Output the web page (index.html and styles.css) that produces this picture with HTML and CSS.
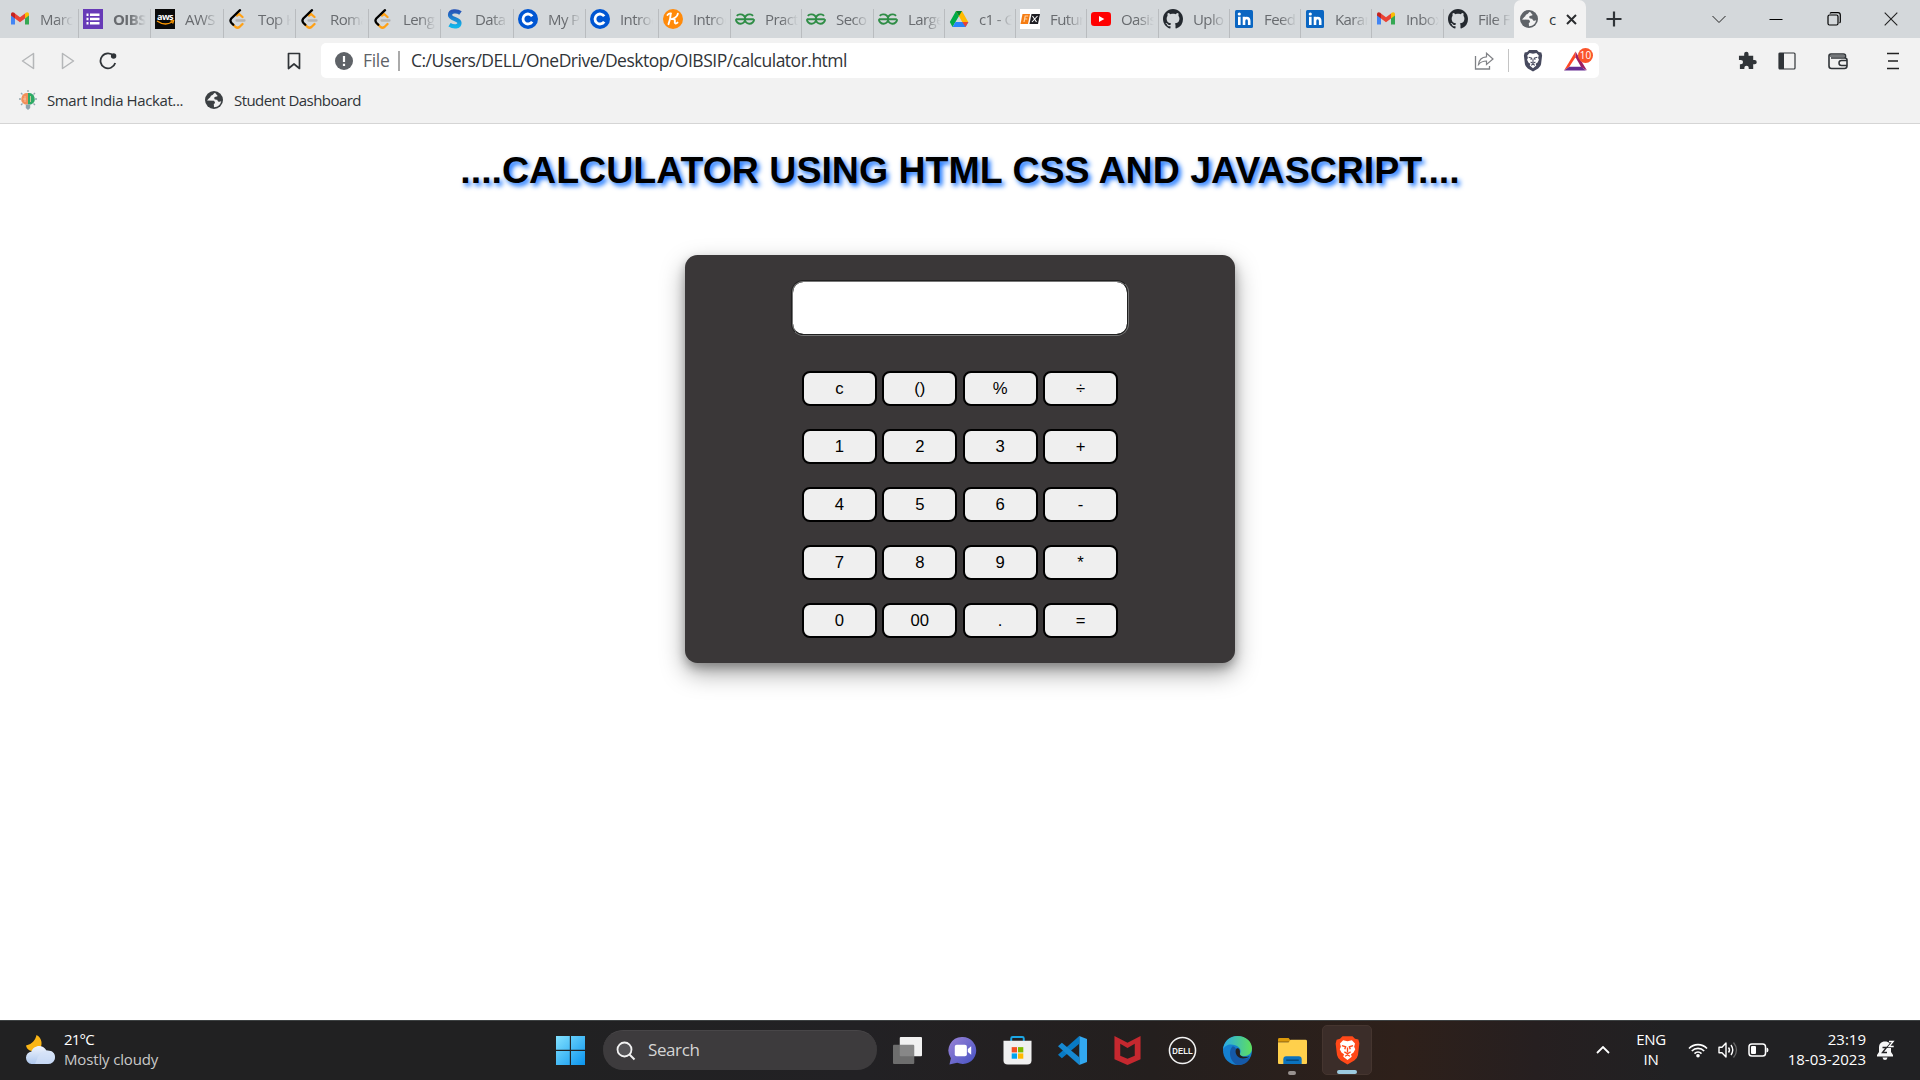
FILE: index.html
```html
<!DOCTYPE html>
<html lang="en">
<head>
<meta charset="utf-8">
<title>calculator</title>
<link rel="stylesheet" href="styles.css">
</head>
<body>
<svg class="defs" width="0" height="0">
  <defs>
    <linearGradient id="s-blue" x1="0" y1="0" x2="0" y2="1"><stop offset="0" stop-color="#2756b8"/><stop offset="1" stop-color="#12b5ea"/></linearGradient>
    <linearGradient id="win" x1="0" y1="0" x2="1" y2="1"><stop offset="0" stop-color="#83e2ff"/><stop offset="1" stop-color="#0a94ee"/></linearGradient>
    <linearGradient id="chat" x1="0" y1="0" x2="1" y2="1"><stop offset="0" stop-color="#9a83d6"/><stop offset="1" stop-color="#4552c4"/></linearGradient>
    <linearGradient id="cloud" x1="0" y1="0" x2="0" y2="1"><stop offset="0" stop-color="#f0f5fd"/><stop offset="1" stop-color="#aec8ee"/></linearGradient>
    <linearGradient id="edge-a" x1="0" y1="0" x2="1" y2="0"><stop offset="0" stop-color="#2aa9e8"/><stop offset="1" stop-color="#5fe05d"/></linearGradient>
    <symbol id="gmail" viewBox="0 0 20 20">
      <path d="M1 5v10.500h4V8z" fill="#4285f4"/><path d="M19 5v10.500h-4V8z" fill="#34a853"/>
      <path d="M15 4.500 10 8.300 5 4.500v5L10 13.300l5-3.800z" fill="#ea4335"/>
      <path d="M1 5.200C1 3 3 2.600 4.300 3.800L5 4.500v5L1 6.500z" fill="#c5221f"/>
      <path d="M19 5.200C19 3 17 2.600 15.700 3.800L15 4.500v5l4-3z" fill="#fbbc04"/>
    </symbol>
    <symbol id="forms" viewBox="0 0 20 20"><path d="M0 0h20v20H0z" fill="#673ab7"/><path d="M3.500 4.500h2v2.500h-2zM7 4.500h9.500V7H7zM3.500 8.700h2v2.500h-2zM7 8.700h9.500v2.500H7zM3.500 12.900h2v2.500h-2zM7 12.900h9.500v2.500H7z" fill="#fff"/></symbol>
    <symbol id="aws" viewBox="0 0 20 20"><path d="M0 0h20v20H0z" fill="#0a0a0a"/><text x="10" y="10.500" text-anchor="middle" textLength="16" lengthAdjust="spacingAndGlyphs" class="logo-aws">aws</text><path d="M2 12q8 5.500 15 1M15.500 12l3-.3-.9 2.800" fill="none" stroke="#ff9900" stroke-width="1.300"/></symbol>
    <symbol id="leet" viewBox="0 0 20 20"><g fill="none" stroke-linecap="round" stroke-width="2.300"><path d="M8.500 11.500h8" stroke="#b3b3b3"/><path d="M9 6.500 11 5l3.500 3M14.500 15l-3 3q-2 1.500-4 0l-3-3" stroke="#ffa116"/><path d="M12 1.200 3.300 9.500q-1.700 2 0 4.200l2 2" stroke="#000"/></g></symbol>
    <symbol id="simpl" viewBox="0 0 20 20"><path d="M15.500 4C12 1.500 5 1.500 5 6c0 4.500 9.500 3.500 9.500 8 0 4.200-6 4.200-10 1.800" fill="none" stroke="url(#s-blue)" stroke-width="4.200"/></symbol>
    <symbol id="coursera" viewBox="0 0 20 20"><circle cx="10" cy="10" r="10" fill="#0056d2"/><path d="M14.200 7.300a5 5 0 1 0 0 5.400" fill="none" stroke="#fff" stroke-width="2.800"/></symbol>
    <symbol id="kaggle" viewBox="0 0 20 20"><circle cx="10" cy="10" r="10" fill="#ff8a0a"/><path d="M7.800 4.500Q7.500 10 5.500 15.200M14.800 4.800c-.5 3-4 5.200-6.800 5.300 4-.5 4.200 1 3.800 3-.2 1.700 1.500 1.700 2.700.5M4.500 6q1.500-2 3.500-1.500" fill="none" stroke="#fff" stroke-width="1.900" stroke-linecap="round"/></symbol>
    <symbol id="gfg" viewBox="0 0 20 20"><path d="M.8 10.200h18M1.800 6.800Q3 5.300 5.200 5.400a4.700 4.700 0 1 1-4.300 4.800M18 6.800q-1.200-1.500-3.200-1.400a4.700 4.700 0 1 0 4.300 4.800" fill="none" stroke="#2f8d46" stroke-width="1.900"/></symbol>
    <symbol id="drive" viewBox="0 0 20 20"><path d="M7 2h6l-3 5-6.500 11L.8 13z" fill="#00ac47"/><path d="M7 2h6l6.200 11h-6z" fill="#ffba00"/><path d="M7 2h6l-3 5z" fill="#00832d"/><path d="M3.500 18 6.500 13h13L16.500 18z" fill="#2684fc"/><path d="M13.300 13h6L16.500 18z" fill="#ea4335"/></symbol>
    <symbol id="fx" viewBox="0 0 20 20"><path d="M0 0h20v20H0z" fill="#fff"/><path d="M2.500 5H10L8 15H.5z" fill="#f57c12"/><path d="M11.500 5H20l-2 10H9.500z" fill="#1f1f24"/><path d="M4 13l1.200-6h3M4.800 10h2.500" fill="none" stroke="#ffd3a3" stroke-width="1.200"/><path d="m12.500 7 4 6m1-6-5.500 6" stroke="#fff" stroke-width="1.100"/></symbol>
    <symbol id="youtube" viewBox="0 0 20 20"><rect y="3" width="20" height="14" rx="3.300" fill="#f00"/><path d="m8 7 5.300 3L8 13z" fill="#fff"/></symbol>
    <symbol id="github" viewBox="0 0 16 16"><path fill="#24292f" d="M8 0C3.580 0 0 3.580 0 8c0 3.540 2.290 6.530 5.470 7.590.4.070.55-.17.55-.38 0-.19-.01-.82-.01-1.490-2.010.37-2.530-.49-2.690-.94-.09-.23-.48-.94-.82-1.130-.28-.15-.68-.52-.01-.53.63-.01 1.080.58 1.230.82.72 1.210 1.870.87 2.330.66.07-.52.28-.87.51-1.070-1.780-.2-3.640-.89-3.640-3.950 0-.87.31-1.590.82-2.150-.08-.2-.36-1.020.08-2.120 0 0 .67-.21 2.200.82.64-.18 1.320-.27 2-.27s1.360.09 2 .27c1.530-1.040 2.200-.82 2.200-.82.44 1.100.16 1.920.08 2.120.51.56.82 1.270.82 2.150 0 3.070-1.870 3.750-3.650 3.950.29.25.54.73.54 1.480 0 1.070-.01 1.930-.01 2.200 0 .21.15.46.55.38A8.010 8.010 0 0 0 16 8c0-4.420-3.580-8-8-8"/></symbol>
    <symbol id="linkedin" viewBox="0 0 20 20"><rect x="1" y="1" width="18" height="18" rx="1.500" fill="#0a66c2"/><circle cx="5.300" cy="5" r="1.600" fill="#fff"/><path d="M5.300 7.800v8.300M10 16.100V7.800M10 12c0-4 5.200-4 5.200 0v4.100" fill="none" stroke="#fff" stroke-width="2.600"/></symbol>
    <symbol id="globe" viewBox="0 0 20 20"><circle cx="10" cy="10" r="9" fill="currentColor"/><path d="M11 2.700c-2 1-1.500 2-3 2.500-2 .6-1.200 2.300-2.700 2.800L3 10.500l7 .3c1.500 1.700 1.200 2.700-.2 3.200l.2 3.300c4-.2 6.300-2.500 7.200-6-2.200 1-3.600.2-4-1.600-2.200.3-3.200-.5-2.900-2.200.5-1.200 2.400-.7 3.400-1.600z" fill="#f2f2f2"/></symbol>
    <symbol id="lion" viewBox="0 0 20 24"><path d="m6 1-2 2-2.700.7-.8 3L1.600 16q.4 2.500 3 4.300L10 23.500l5.400-3.200q2.600-1.800 3-4.300l1.100-9.300-.8-3L16 3l-2-2z" fill="var(--shield)"/><path d="M6.500 4.200 10 5l3.500-.8L16 6.700l-.7 2.600.9 2-1.400 2.700-2 1.300.6 2L10 20l-3.400-2.700.6-2-2-1.300-1.400-2.700.9-2L4 6.700z" fill="#fff"/><path d="m5.500 8.500 3 .9-.7 2M14.500 8.500l-3 .9.700 2M10 10v4M7.500 13.500 10 15l2.500-1.500M8 17l2-1 2 1" fill="none" stroke="var(--shield)" stroke-width="1.100"/></symbol>
  </defs>
</svg>

<header class="tabstrip">
  <div class="tabs">
    <div class="tab first"><svg><use href="#gmail"/></svg><span>Marc</span></div>
    <div class="tab"><svg><use href="#forms"/></svg><span class="strong">OIBS</span></div>
    <div class="tab"><svg><use href="#aws"/></svg><span>AWS</span></div>
    <div class="tab"><svg><use href="#leet"/></svg><span>Top K</span></div>
    <div class="tab"><svg><use href="#leet"/></svg><span>Roma</span></div>
    <div class="tab"><svg><use href="#leet"/></svg><span>Leng</span></div>
    <div class="tab"><svg><use href="#simpl"/></svg><span>Data</span></div>
    <div class="tab"><svg><use href="#coursera"/></svg><span>My P</span></div>
    <div class="tab"><svg><use href="#coursera"/></svg><span>Introd</span></div>
    <div class="tab"><svg><use href="#kaggle"/></svg><span>Introd</span></div>
    <div class="tab"><svg><use href="#gfg"/></svg><span>Pract</span></div>
    <div class="tab"><svg><use href="#gfg"/></svg><span>Seco</span></div>
    <div class="tab"><svg><use href="#gfg"/></svg><span>Large</span></div>
    <div class="tab"><svg><use href="#drive"/></svg><span>c1 - G</span></div>
    <div class="tab"><svg><use href="#fx"/></svg><span>Futur</span></div>
    <div class="tab"><svg><use href="#youtube"/></svg><span>Oasis</span></div>
    <div class="tab"><svg><use href="#github"/></svg><span>Uplo</span></div>
    <div class="tab"><svg><use href="#linkedin"/></svg><span>Feed</span></div>
    <div class="tab"><svg><use href="#linkedin"/></svg><span>Karan</span></div>
    <div class="tab"><svg><use href="#gmail"/></svg><span>Inbox</span></div>
    <div class="tab last"><svg><use href="#github"/></svg><span>File F</span></div>
    <div class="tab active"><svg><use href="#globe"/></svg><span>c</span><svg class="close" viewBox="0 0 11 11"><path d="m1 1 9 9m0-9-9 9" stroke="#2b2d30" stroke-width="2"/></svg></div>
  </div>
  <svg class="new-tab" viewBox="0 0 16 16"><path d="M8 .5v15M.5 8h15" stroke="#303438" stroke-width="2.200"/></svg>
  <div class="window-buttons">
    <svg viewBox="0 0 14 14"><path d="m.5 4 6.500 6.500L13.500 4" fill="none" stroke="#222"/></svg>
    <svg viewBox="0 0 14 14"><path d="M.5 7.500h13" stroke="#000"/></svg>
    <svg viewBox="0 0 14 14"><rect x="1" y="3" width="10" height="10" rx="1.500" fill="none" stroke="#000" stroke-width="1.200"/><path d="M3 1.500q.5-.8 1.500-.8H11q2.300 0 2.300 2.300v6.500q0 1-.8 1.500" fill="none" stroke="#000" stroke-width="1.200"/></svg>
    <svg viewBox="0 0 14 14"><path d="m.7.700 12.600 12.600m0-12.600L.7 13.300" stroke="#222" stroke-width="1.100"/></svg>
  </div>
</header>

<nav class="toolbar">
  <div class="nav-row">
    <svg class="back" viewBox="0 0 14 18"><path d="M12.500 1.500v15L1.500 9z" fill="none" stroke="#b5b7b9" stroke-width="1.500" stroke-linejoin="round"/></svg>
    <svg class="forward" viewBox="0 0 14 18"><path d="M1.500 1.500v15l11-7.500z" fill="none" stroke="#b5b7b9" stroke-width="1.500" stroke-linejoin="round"/></svg>
    <svg class="reload" viewBox="0 0 18 18"><path d="M14.700 4A7.500 7.500 0 1 0 16.200 11" fill="none" stroke="#303438" stroke-width="1.800"/><circle cx="14.600" cy="4" r="2.700" fill="#303438"/></svg>
    <svg class="bookmark" viewBox="0 0 14 18"><path d="M1.500 1.500h11v15L7 12l-5.500 4.500z" fill="none" stroke="#303438" stroke-width="1.700" stroke-linejoin="round"/></svg>
    <div class="address">
      <svg class="info" viewBox="0 0 18 18"><circle cx="9" cy="9" r="9" fill="#5f6368"/><path d="M9 4v6M9 11.700V14" stroke="#fff" stroke-width="2.200"/></svg>
      <span class="scheme">File</span>
      <span class="url">C:/Users/DELL/OneDrive/Desktop/OIBSIP/calculator.html</span>
      <svg class="share" viewBox="0 0 20 18"><path d="M1.500 4v13h14v-3" fill="none" stroke="#808286" stroke-width="1.300"/><path d="M4.500 12.500C5 7.500 8 5 12.500 4.800V1.200L19 7l-6.500 5.500V9Q7.500 9 4.500 12.500z" fill="none" stroke="#808286" stroke-width="1.200"/></svg>
      <svg class="shield"><use href="#lion"/></svg>
      <div class="rewards">
        <svg viewBox="0 0 24 20"><path d="M12 0v6L5.500 16 0 20z" fill="#ff4724"/><path d="M12 0v6l6 10.500 6 3.500z" fill="#9e1f63"/><path d="M0 20 5.500 16H18l5 4z" fill="#662d91"/></svg>
        <span class="badge">10</span>
      </div>
    </div>
    <div class="extensions">
      <svg class="puzzle" viewBox="0 0 20 20"><path d="M1 5h5.500V3a2.300 2.300 0 0 1 4.600 0v2H16v4.500h1.500a2.200 2.200 0 0 1 0 4.500H16v5h-4.700v-1.300a2.300 2.300 0 0 0-4.600 0V19H2v-5h1a2.300 2.300 0 0 0 0-4.600H1z" fill="#303438"/></svg>
      <svg class="side" viewBox="0 0 18 18"><rect x="1" y="1" width="16" height="16" rx="1" fill="none" stroke="#303438" stroke-width="1.200"/><path d="M1 1h5v16H1z" fill="#303438"/></svg>
      <svg class="wallet" viewBox="0 0 20 18"><path d="M17.500 6V4q0-2-2-2H3Q1 2 1 4v10q0 2.500 2.500 2.500h13q2.300 0 2.500-2.500V8q0-2-2.500-2H3" fill="none" stroke="#303438" stroke-width="1.600"/><path d="M19 8.500h-5.500a2.500 2.500 0 0 0 0 5H19" fill="none" stroke="#303438" stroke-width="1.500"/><path d="M2 3h15v2H2z" fill="#74777a"/></svg>
      <svg class="menu" viewBox="0 0 12 18"><path d="M0 1.500h12M1 9h10M0 16.500h12" stroke="#222" stroke-width="1.700"/></svg>
    </div>
  </div>
  <div class="bookmarks">
    <svg class="bulb" viewBox="0 0 20 20"><path d="M10 0v2M3 3l1.500 1.500M17 3l-1.500 1.500M1 9h2M17 9h2M3 15l1.500-1.500M17 15l-1.500-1.500" stroke="#91a5ad" stroke-width="1.300"/><path d="M10 3a6 6 0 0 0-3 11.500h3z" fill="#f1905b"/><path d="M10 3a6 6 0 0 1 3 11.500h-3z" fill="#2eaa66"/><path d="M7 6v6M12.500 6v6M5 9h3" stroke="#ffd0b2" stroke-width=".7"/><path d="M7.800 14.500h4.400V18L10 20l-2.200-2z" fill="#8fa3ad"/></svg>
    <span class="bm-one">Smart India Hackat...</span>
    <svg class="world"><use href="#globe"/></svg>
    <span class="bm-two">Student Dashboard</span>
  </div>
</nav>

<main class="page">
  <h1>....CALCULATOR USING HTML CSS AND JAVASCRIPT....</h1>
  <section class="calculator">
    <input class="display" type="text" aria-label="Result">
    <div class="keys">
      <button>c</button><button>()</button><button>%</button><button>÷</button>
      <button>1</button><button>2</button><button>3</button><button>+</button>
      <button>4</button><button>5</button><button>6</button><button>-</button>
      <button>7</button><button>8</button><button>9</button><button>*</button>
      <button>0</button><button>00</button><button>.</button><button>=</button>
    </div>
  </section>
</main>

<footer class="taskbar">
  <div class="weather">
    <svg viewBox="0 0 30 30"><path d="M11.500 0c-1 5-4 9-10.500 10.500C2 16 9 18 14 14.500 18 11 17.500 3 11.500 0z" fill="#fbb616"/><path d="M6.500 29a6.300 6.300 0 0 1 0-12.500C8 11 17 8 21.500 15.500 27 15 30 18 30 22c0 4-3 7-7 7z" fill="url(#cloud)"/><path d="M13 22q4-7 9-6.300 7.500.5 8 6.300-.5 6.500-7 7H10z" fill="#d6e3f8" opacity=".6"/></svg>
    <div><span class="temp">21°C</span><span class="sky">Mostly cloudy</span></div>
  </div>
  <div class="app"><svg viewBox="0 0 30 30"><path d="M0 0h14.300v14.300H0zM15.500 0H30v14.300H15.500zM0 15.500h14.300V30H0zM15.500 15.500H30V30H15.500z" fill="url(#win)"/></svg></div>
  <div class="search"><svg viewBox="0 0 20 20"><circle cx="8.500" cy="8.500" r="7" fill="#555457" stroke="#f1f1f1" stroke-width="1.800"/><path d="m13.500 13.500 5 5" stroke="#f1f1f1" stroke-width="2"/></svg><span>Search</span></div>
  <div class="app"><svg viewBox="0 0 30 30"><rect x="7" y="1" width="23" height="20" rx="1" fill="#f1f1f1"/><rect x="0" y="9" width="22" height="20" rx="1" fill="#777" opacity=".88"/></svg></div>
  <div class="app"><svg viewBox="0 0 30 30"><path d="M15 1a14 14 0 1 1-5.500 26.800L1.500 29.500 3 23A14 14 0 0 1 15 1z" fill="url(#chat)"/><rect x="7" y="9" width="12.500" height="12" rx="2" fill="#fff"/><path d="M20.500 13.500 24 10.500v9l-3.500-3z" fill="#fff"/></svg></div>
  <div class="app"><svg viewBox="0 0 30 30"><path d="M8.500 6V2.500Q8.500 1 10 1h10q1.500 0 1.500 1.500V6" fill="none" stroke="#1ba7e5" stroke-width="2"/><path d="M.5 5h29v20q0 4.500-4.500 4.500H5Q.5 29.500.5 25z" fill="#f0f0f0"/><path d="M9 11.500h5.500V17H9z" fill="#f25022"/><path d="M15.500 11.500H21V17h-5.500z" fill="#7fba00"/><path d="M9 18h5.500v5.500H9z" fill="#00a4ef"/><path d="M15.500 18H21v5.500h-5.500z" fill="#ffb900"/></svg></div>
  <div class="app"><svg viewBox="0 0 30 30"><path d="m22 0 8 3v24l-8 3z" fill="#32a8f0"/><path d="M22 0v8L4 23l-4-3.500z" fill="#087ac4"/><path d="M22 30v-8L4 7 0 10.500z" fill="#1689d2"/></svg></div>
  <div class="app"><svg viewBox="0 0 30 30"><path d="m1.500 0 13.500 7L28.500 0v24L15 30 1.500 24zM7.500 8v12.500l7.500 3 7.500-3V8L15 12.500z" fill="#c5282f" fill-rule="evenodd"/></svg></div>
  <div class="app"><svg viewBox="0 0 30 30"><circle cx="15" cy="15" r="13.500" fill="none" stroke="#f2f2f2" stroke-width="1.600"/><text x="15" y="18.500" text-anchor="middle" textLength="21" lengthAdjust="spacingAndGlyphs" class="logo-dell">DELL</text></svg></div>
  <div class="app"><svg viewBox="0 0 30 30"><circle cx="15" cy="15" r="15" fill="#1580d0"/><path d="M0 14C1 5 7 0 15 0c9 0 15 6 15 13 0 5-4 8-9 8-3 0-4-1-3.500-2.500C21 12 12 7.500 5.500 9 2.500 10 .7 12 0 14z" fill="url(#edge-a)"/><path d="M10 10.500c-5 5-3 15 4 19.300C22 31 27 26 28 22c-7 4-16-.5-14.500-7.500.3-2-1-3.500-3.500-4z" fill="#1559a8"/><path d="M14 13c2-1 4 .5 3.500 5-.5 3 6 4.500 10 3-3 3.500-12 3-14-2.500-.8-2-.7-4 .5-5.500z" fill="#241f1e"/></svg></div>
  <div class="app running"><svg viewBox="0 0 30 30"><path d="M0 3.500Q0 2 1.500 2H11l3 4H0z" fill="#dc9a0b"/><path d="M0 6.500h11l2-2.500h15.500Q30 4 30 5.500V28q0 1-1 1H1q-1 0-1-1z" fill="#ffd04c"/><path d="M5.500 29v-5q0-3 3-3h13q3 0 3 3v5z" fill="#0b72bd"/><path d="M8.500 25h13" stroke="#053f6d" stroke-width="1.300"/></svg></div>
  <div class="app current"><svg class="brave"><use href="#lion"/></svg></div>
  <div class="tray">
    <svg class="chevron" viewBox="0 0 14 8"><path d="m1 7 6-6 6 6" fill="none" stroke="#fff" stroke-width="1.800"/></svg>
    <div class="lang"><span>ENG</span><span>IN</span></div>
    <svg class="wifi" viewBox="0 0 20 16"><g fill="none" stroke="#fff" stroke-width="1.600"><path d="M1 6.500a12.500 12.500 0 0 1 18 0"/><path d="M3.800 9a8.700 8.700 0 0 1 12.400 0"/><path d="M6.500 11.600a5 5 0 0 1 7 0"/></g><circle cx="10" cy="13.800" r="1.800" fill="#fff"/></svg>
    <svg class="sound" viewBox="0 0 20 18"><path d="M1 6.200h3L8 2v14l-4-4.200H1z" fill="none" stroke="#fff" stroke-width="1.400" stroke-linejoin="round"/><path d="M10.500 6.500q2 2.500 0 5M13 4q3.500 5 0 10" fill="none" stroke="#fff" stroke-width="1.400"/><path d="M15.500 1.500q6 7.500 0 15" fill="none" stroke="#666" stroke-width="1.300"/></svg>
    <svg class="battery" viewBox="0 0 21 14"><rect x="1" y="1" width="16.500" height="12" rx="2.800" fill="none" stroke="#fff" stroke-width="1.500"/><rect x="3" y="3" width="5" height="8" rx="1" fill="#fff"/><path d="M18.500 4.500q2 .3 2 2.500t-2 2.500z" fill="#fff"/></svg>
    <div class="clock"><span>23:19</span><span>18-03-2023</span></div>
    <svg class="bell" viewBox="0 0 18 20"><path d="M8 1.500c-4 0-6 2.500-6 6V12L0 15v1.500h16V15l-2-3V7.500C14 4 12 1.500 8 1.500zM5.500 17.500h5Q10 20 8 20t-2.500-2.500z" fill="#f7f7f7"/><path d="M5.500 7.500h4L5.500 12.500h4.500" fill="none" stroke="#222224" stroke-width="1.400"/><path d="M12 1.500h4.200L12 6.500h4.700" fill="none" stroke="#222224" stroke-width="3"/><path d="M12 1.500h4.200L12 6.500h4.700" fill="none" stroke="#fff" stroke-width="1.300"/></svg>
  </div>
</footer>
</body>
</html>
```
FILE: styles.css
```css
* { box-sizing: border-box; }
body {
  margin: 0;
  width: 1920px;
  height: 1080px;
  overflow: hidden;
  display: flex;
  flex-direction: column;
  background: #fff;
  font-family: "Open Sans", "Noto Sans", sans-serif;
}
svg { display: block; flex: none; }
.defs { position: absolute; }
.logo-aws { font: bold 9px "Open Sans", sans-serif; fill: #fff; }
.logo-dell { font: bold 8.500px "Liberation Sans", sans-serif; fill: #f2f2f2; }

/* tab strip */
.tabstrip { height: 38px; display: flex; align-items: center; background: #d4d8db; }
.tabs {
  height: 38px;
  display: grid;
  grid-template-columns: 79px 72px 73px 72px 73px 72px 73px 72px 73px 72px 71px 72px 71px 71px 71px 72px 71px 71px 71px 72px 70px 72px;
}
.tab {
  display: flex;
  align-items: center;
  gap: 10px;
  padding-left: 4px;
  overflow: hidden;
  font-size: 15px;
  line-height: 20px;
  letter-spacing: -0.600px;
  color: #686b6f;
  background: linear-gradient(#b9bcbf, #b9bcbf) right bottom / 1px 29px no-repeat;
}
.tab svg { width: 20px; height: 20px; }
.tab span {
  width: 33px;
  margin-top: -1px;
  overflow: hidden;
  white-space: nowrap;
  -webkit-mask-image: linear-gradient(90deg, #000 50%, transparent);
  mask-image: linear-gradient(90deg, #000 50%, transparent);
}
.tab .strong { font-weight: 700; }
.tab.first { padding-left: 10px; }
.tab.last { background: none; }
.tab.active { background: #f2f2f2; border-radius: 7px 7px 0 0; padding-left: 5px; color: #303438; }
.tab.active svg { color: #5f6368; }
.tab.active span { width: 7px; -webkit-mask-image: none; mask-image: none; overflow: visible; }
.tab.active .close { width: 11px; height: 11px; }
.new-tab { width: 16px; height: 16px; margin-left: 20px; }
.window-buttons { display: flex; gap: 43.500px; margin-left: auto; margin-right: 22px; }
.window-buttons svg { width: 14px; height: 14px; }

/* toolbar */
.toolbar { height: 86px; background: #f2f2f2; border-bottom: 1px solid #d5d5d5; padding-top: 5px; }
.nav-row { height: 35px; display: flex; align-items: center; }
.back, .forward { width: 14px; height: 18px; }
.back { margin-left: 21px; }
.forward { margin-left: 26px; }
.reload { width: 18px; height: 18px; margin-left: 24px; }
.bookmark { width: 14px; height: 18px; margin-left: 170px; }
.address {
  width: 1278px;
  height: 35px;
  margin-left: 20px;
  display: flex;
  align-items: center;
  background: #fff;
  border-radius: 5px;
  font-size: 17.500px;
}
.info { width: 18px; height: 18px; margin-left: 14px; }
.scheme { width: 37px; height: 20px; line-height: 18px; margin-left: 10px; border-right: 2px solid #aaa; color: #5f6368; letter-spacing: -0.3px; }
.url { margin: -2px 0 0 11px; color: #303438; white-space: nowrap; letter-spacing: -0.500px; }
.share { width: 20px; height: 18px; margin-left: auto; }
.shield { --shield: #474a5e; width: 36px; height: 23px; margin-left: 14px; padding-left: 14px; padding-right: 1px; border-left: 1px solid #c4c4c4; }
.rewards { position: relative; width: 35px; margin-left: 20px; }
.rewards svg { width: 23px; height: 20px; }
.badge {
  position: absolute;
  left: 14px;
  top: -3px;
  width: 15px;
  height: 15px;
  border-radius: 50%;
  background: #fb542b;
  color: #fff;
  font: 10px/15px "Open Sans", sans-serif;
  text-align: center;
}
.extensions { display: flex; align-items: center; margin-left: 139px; }
.puzzle { width: 19px; height: 19px; }
.side { width: 18px; height: 18px; margin-left: 21px; }
.wallet { width: 20px; height: 18px; margin-left: 32px; }
.menu { width: 12px; height: 18px; margin-left: 39px; }
.bookmarks { height: 44px; display: flex; align-items: center; padding-left: 18px; font-size: 15px; color: #303438; white-space: nowrap; }
.bulb { width: 20px; height: 20px; }
.bm-one { width: 138px; margin-left: 9px; letter-spacing: -0.400px; }
.world { width: 20px; height: 20px; margin-left: 19px; color: #3c4043; }
.bm-two { margin-left: 10px; letter-spacing: -0.550px; }

/* calculator page */
.page { height: 896px; font-family: "Liberation Sans", Arial, sans-serif; }
h1 {
  margin: 0;
  padding-top: 24px;
  font-size: 37.500px;
  line-height: 44px;
  text-align: center;
  color: #000;
  text-shadow: 2.500px 2.500px 5px #0a6cff;
}
.calculator {
  width: 550px;
  height: 408px;
  margin: 63px auto 0;
  padding-top: 25px;
  background: #3a3738;
  border-radius: 12.500px;
  box-shadow: 0 5px 10px rgba(0, 0, 0, .25), 0 10px 25px rgba(0, 0, 0, .36);
}
.display {
  display: block;
  width: 338px;
  height: 56px;
  margin: 0 auto 35px;
  border: 2px groove #767676;
  border-radius: 12.500px;
  background: #fff;
}
.keys { display: grid; grid-template-columns: repeat(4, 75px); gap: 23px 5.400px; justify-content: center; }
.keys button {
  height: 35px;
  padding: 0;
  border: 2px solid #000;
  border-radius: 8px;
  background: #efefef;
  color: #000;
  font: 16.670px "Liberation Sans", Arial, sans-serif;
}

/* taskbar */
.taskbar {
  height: 60px;
  display: flex;
  align-items: center;
  border-top: 1px solid #3d4142;
  padding-bottom: 1px;
  background: linear-gradient(90deg, #212122 0, #212122 28%, #222124 45%, #241f1e 60%, #2e201a 73%, #261f20 80%, #212123 87%);
  color: #fff;
  font-size: 15px;
}
.weather { width: 543px; padding-left: 25px; display: flex; align-items: center; gap: 9px; }
.weather svg { width: 30px; height: 30px; }
.weather div, .lang, .clock { margin-top: -3px; }
.weather span, .lang span, .clock span { display: block; line-height: 20px; white-space: nowrap; }
.temp { letter-spacing: -0.800px; }
.sky { color: #c9c9c9; letter-spacing: -0.15px; }
.app { position: relative; width: 55px; height: 50px; display: flex; align-items: center; justify-content: center; }
.app svg { width: 29px; height: 29px; }
.search {
  width: 274px;
  height: 40px;
  margin: 0 2.500px 0 5px;
  padding-left: 13px;
  display: flex;
  align-items: center;
  gap: 12px;
  border-radius: 20px;
  background: #3d3b3d;
  border-top: 1px solid #484648;
  font-size: 17px;
  line-height: 22px;
  color: #d5d5d5;
  letter-spacing: -0.400px;
}
.search svg { width: 20px; height: 20px; }
.search span { margin-top: -2px; }
.app.current { width: 50px; margin-left: 2.500px; border-radius: 5px; background: #3b2d29; border: 1px solid #45352f; }
.app .brave { --shield: #ff4818; width: 27px; height: 30px; }
.running::after, .current::after {
  content: "";
  position: absolute;
  left: 50%;
  bottom: 0;
  width: 8px;
  height: 4px;
  margin-left: -4px;
  border-radius: 2px;
  background: #99928f;
}
.current::after { width: 20px; margin-left: -10px; background: #9ccbe0; }
.tray { display: flex; align-items: center; margin-left: auto; margin-right: 25px; }
.chevron { width: 14px; height: 8px; }
.lang { width: 30px; margin-left: 26px; text-align: center; letter-spacing: -0.3px; }
.wifi { width: 20px; height: 16px; margin-left: 22px; }
.sound { width: 20px; height: 18px; margin-left: 10px; }
.battery { width: 21px; height: 14px; margin-left: 10px; }
.clock { width: 80px; margin-left: 17px; text-align: right; letter-spacing: 0; }
.bell { width: 18px; height: 20px; margin-left: 11px; }
```
